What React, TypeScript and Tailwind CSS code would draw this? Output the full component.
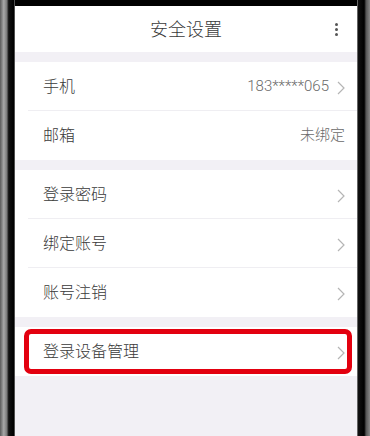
import React from "react";

const Chevron = () => (
  <svg width="8" height="14" viewBox="0 0 8 14" className="ml-[8px] mt-[2px]">
    <path d="M1 1 L7 7 L1 13" fill="none" stroke="#b5b5b5" strokeWidth="1.2" />
  </svg>
);

type RowProps = { label: string; value?: string; arrow?: boolean; divider?: boolean };

function Row({ label, value, arrow = true, divider = false }: RowProps) {
  return (
    <div className="relative h-[49px] flex items-center pl-[28px] pr-[12px] bg-white">
      <span className="text-[16px] text-[#3a3a3a]">{label}</span>
      <div className="ml-auto flex items-center">
        {value && <span className="text-[15px] text-[#6a6a6a]">{value}</span>}
        {arrow && <Chevron />}
      </div>
      {divider && <div className="absolute left-[13px] right-0 bottom-0 h-px bg-[#efeef2]" />}
    </div>
  );
}

export default function App() {
  return (
    <div
      className="w-[370px] h-[436px] flex bg-black overflow-hidden font-light"
      style={{ fontFamily: 'Roboto, "Noto Sans CJK SC", "Noto Sans", sans-serif' }}
    >
      <div className="w-[15px] h-full bg-[linear-gradient(to_right,#5a5a5a,#a8a8a8_25%,#7a7a7a_45%,#111_58%,#000_90%,#777)]" />
      <div className="w-[342px] h-full pt-[6px] flex flex-col">
        <div className="flex-1 flex flex-col bg-[#f2f0f5]">
          <header className="relative h-[46px] bg-white flex items-center justify-center">
            <span className="text-[18px] text-[#3a3a3a]">安全设置</span>
            <div className="absolute right-[19px] top-[17px] flex flex-col gap-[2px]">
              <span className="w-[3px] h-[3px] rounded-full bg-[#555]" />
              <span className="w-[3px] h-[3px] rounded-full bg-[#555]" />
              <span className="w-[3px] h-[3px] rounded-full bg-[#555]" />
            </div>
          </header>

          <div className="mt-[10px]">
            <Row label="手机" value="183*****065" divider />
            <Row label="邮箱" value="未绑定" arrow={false} />
          </div>

          <div className="mt-[10px]">
            <Row label="登录密码" divider />
            <Row label="绑定账号" divider />
            <Row label="账号注销" />
          </div>

          <div className="mt-[10px] relative">
            <Row label="登录设备管理" />
            <div className="absolute left-[9px] right-[5px] top-[2px] bottom-[2px] border-[5px] border-[#e3000f] rounded-[7px]" />
          </div>
        </div>
      </div>
      <div className="w-[13px] h-full bg-[linear-gradient(to_right,#999,#111_10%,#000_55%,#555_70%,#888)]" />
    </div>
  );
}
